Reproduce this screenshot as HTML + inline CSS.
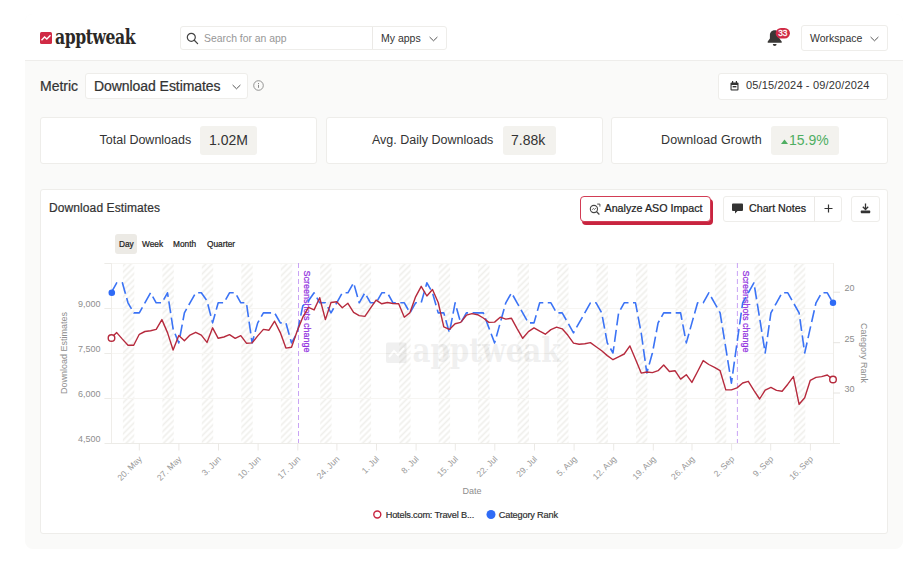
<!DOCTYPE html>
<html><head><meta charset="utf-8"><title>apptweak - Download Estimates</title>
<style>
*{box-sizing:border-box;margin:0;padding:0}
html,body{width:922px;height:566px;background:#fff;overflow:hidden}
body{position:relative;font-family:"Liberation Sans",sans-serif;color:#333;}
.app{position:absolute;left:25px;top:14px;width:878px;height:535px;background:#fafaf9;border-radius:8px;overflow:hidden}
.hdr{position:absolute;left:0;top:0;width:878px;height:47px;background:#fff;border-bottom:1px solid #eeedeb}
.abs{position:absolute}
.box{position:absolute;background:#fff;border:1px solid #eeedea;border-radius:3px}
.t{position:absolute;white-space:nowrap;line-height:1}
.chart{position:absolute;left:0;top:0}
.ax{font-family:"Liberation Sans",sans-serif;font-size:9px;fill:#8e8e8e}
.pl{font-family:"Liberation Sans",sans-serif;font-size:9px;fill:#9333e0;stroke:#9333e0;stroke-width:0.25px}
.lg{font-family:"Liberation Sans",sans-serif;font-size:9.2px;fill:#2d2d2d;stroke:#2d2d2d;stroke-width:0.18px}
.logo{font-family:"DejaVu Serif Condensed","Liberation Serif",serif;font-weight:bold;font-size:20px;color:#2b2826;letter-spacing:-0.5px;transform-origin:0 0;transform:scaleX(0.868)}
.pill{position:absolute;background:#f3f2ee;border-radius:3px}
.m{-webkit-text-stroke:0.22px currentColor}
</style></head><body>
<div class="app">
 <div class="hdr"></div>
</div>
<!-- header -->
<svg class="abs" style="left:40px;top:32px" width="12" height="12" viewBox="0 0 12 12"><rect width="12" height="12" rx="1.5" fill="#d02a45"/><polyline points="1.5,8.2 4.6,5 6.8,7 10.5,3.2" fill="none" stroke="#fff" stroke-width="1.4"/></svg>
<div class="t logo" style="left:55px;top:27px">apptweak</div>
<div class="box" style="left:180px;top:26px;width:267px;height:24px"></div>
<div class="abs" style="left:372px;top:27px;width:1px;height:22px;background:#ebe9e6"></div>
<svg class="abs" style="left:186px;top:32px" width="13" height="13" viewBox="0 0 13 13"><circle cx="5.3" cy="5.3" r="4" fill="none" stroke="#444" stroke-width="1.2"/><line x1="8.3" y1="8.3" x2="11.6" y2="11.6" stroke="#444" stroke-width="1.3" stroke-linecap="round"/></svg>
<div class="t" style="left:204px;top:33.500px;font-size:10.4px;color:#979797">Search for an app</div>
<div class="t" style="left:381px;top:32.500px;font-size:10.5px;color:#333">My apps</div>
<svg class="abs" style="left:429px;top:36px" width="9" height="6" viewBox="0 0 9 6"><polyline points="0.600,1 4.500,4.800 8.400,1" fill="none" stroke="#555" stroke-width="1"/></svg>
<!-- bell -->
<svg class="abs" style="left:766px;top:27px" width="26" height="22" viewBox="0 0 26 22"><path d="M8.700 3.200c-3 0-4.800 2.200-4.800 5v3.300l-2.200 3.100v1.100h14v-1.100l-2.200-3.100v-3.300c0-2.800-1.800-5-4.800-5z" fill="#3a3836"/><path d="M6.800 17.100h3.800a1.900 1.900 0 0 1-3.800 0z" fill="#3a3836"/><rect x="9.700" y="1" width="14.200" height="10.400" rx="5.200" fill="#d02a45"/><text x="16.800" y="9.100" text-anchor="middle" font-family="Liberation Sans, sans-serif" font-size="8.300" fill="#fff" stroke="#fff" stroke-width="0.300">33</text></svg>
<div class="box" style="left:801px;top:25px;width:87px;height:26px"></div>
<div class="t" style="left:810px;top:32.500px;font-size:10.500px;color:#333">Workspace</div>
<svg class="abs" style="left:870px;top:36px" width="9" height="6" viewBox="0 0 9 6"><polyline points="0.600,1 4.500,4.800 8.400,1" fill="none" stroke="#555" stroke-width="1"/></svg>
<!-- metric row -->
<div class="t m" style="left:40px;top:78.500px;font-size:14px;color:#333">Metric</div>
<div class="box" style="left:85px;top:73px;width:163px;height:26px"></div>
<div class="t m" style="left:94px;top:78.500px;font-size:14px;letter-spacing:-0.06px;color:#333">Download Estimates</div>
<svg class="abs" style="left:232px;top:83.500px" width="9" height="6" viewBox="0 0 9 6"><polyline points="0.600,1 4.500,4.800 8.400,1" fill="none" stroke="#555" stroke-width="1"/></svg>
<svg class="abs" style="left:253px;top:80px" width="11" height="11" viewBox="0 0 11 11"><circle cx="5.500" cy="5.500" r="4.800" fill="none" stroke="#888" stroke-width="0.900"/><rect x="5" y="4.800" width="1" height="3" fill="#888"/><rect x="5" y="3" width="1" height="1" fill="#888"/></svg>
<div class="box" style="left:718px;top:73px;width:170px;height:27px"></div>
<svg class="abs" style="left:729.5px;top:81px" width="9" height="10" viewBox="0 0 9 10"><rect x="0.500" y="1.500" width="8" height="8" rx="1" fill="#333"/><rect x="1.600" y="4" width="5.800" height="4.400" fill="#fff"/><rect x="2.600" y="5" width="3.800" height="1.400" fill="#333"/><rect x="2" y="0" width="1.200" height="2" fill="#333"/><rect x="5.800" y="0" width="1.200" height="2" fill="#333"/></svg>
<div class="t" style="left:746px;top:80px;font-size:11px;letter-spacing:0.16px;color:#333">05/15/2024 - 09/20/2024</div>
<!-- stat cards -->
<div class="box" style="left:40px;top:117px;width:277px;height:47px"></div>
<div class="box" style="left:326px;top:117px;width:277px;height:47px"></div>
<div class="box" style="left:611px;top:117px;width:277px;height:47px"></div>
<div class="t" style="left:99.500px;top:133.500px;font-size:12.500px">Total Downloads</div>
<div class="pill" style="left:200px;top:126px;width:57px;height:29px"></div>
<div class="t" style="left:209px;top:133px;font-size:14px">1.02M</div>
<div class="t" style="left:372px;top:133.500px;font-size:12.500px">Avg. Daily Downloads</div>
<div class="pill" style="left:503px;top:126px;width:53px;height:29px"></div>
<div class="t" style="left:511px;top:133px;font-size:14px">7.88k</div>
<div class="t" style="left:661px;top:133.500px;font-size:12.500px;letter-spacing:0.1px">Download Growth</div>
<div class="pill" style="left:770.500px;top:126px;width:68px;height:29px"></div>
<svg class="abs" style="left:781px;top:139px" width="7" height="5" viewBox="0 0 7 5"><polygon points="0,5 3.500,0.500 7,5" fill="#4fae62"/></svg>
<div class="t" style="left:789px;top:133px;font-size:14px;color:#4fae62">15.9%</div>
<!-- chart card -->
<div class="box" style="left:40px;top:189px;width:848px;height:345px"></div>
<div class="t m" style="left:49px;top:202px;font-size:12px;letter-spacing:0.1px;color:#333">Download Estimates</div>
<div class="abs" style="left:582px;top:198.500px;width:130.500px;height:26px;border-radius:4px;background:#c8243f"></div>
<div class="abs" style="left:580px;top:196px;width:130.500px;height:26px;border-radius:4px;background:#fff;border:1px solid #d23c55"></div>
<svg class="abs" style="left:588.500px;top:202.500px" width="12" height="12" viewBox="0 0 11 11"><circle cx="4.500" cy="5.500" r="3.300" fill="none" stroke="#444" stroke-width="1"/><line x1="7" y1="8" x2="9.500" y2="10.500" stroke="#444" stroke-width="1.100"/><polyline points="2.800,6.300 4,5 5,6 6.300,4.500" fill="none" stroke="#444" stroke-width="0.700"/><polyline points="7.500,1 10,1 10,3.300" fill="none" stroke="#444" stroke-width="0.900"/></svg>
<div class="t m" style="left:604.500px;top:203px;font-size:10.700px;color:#222">Analyze ASO Impact</div>
<div class="box" style="left:723px;top:196px;width:119px;height:26px"></div>
<div class="abs" style="left:814px;top:197px;width:1px;height:24px;background:#ebe9e6"></div>
<svg class="abs" style="left:732px;top:203px" width="11" height="11" viewBox="0 0 11 11"><path d="M1 0.500h9a1 1 0 0 1 1 1v5.500a1 1 0 0 1-1 1H5.500l-2.500 2.500v-2.500H1a1 1 0 0 1-1-1V1.500a1 1 0 0 1 1-1z" fill="#333"/></svg>
<div class="t m" style="left:749px;top:203px;font-size:10.700px;color:#222">Chart Notes</div>
<svg class="abs" style="left:824px;top:204px" width="9" height="9" viewBox="0 0 9 9"><path d="M4.500 0.500v8M0.500 4.500h8" stroke="#333" stroke-width="1.200"/></svg>
<div class="box" style="left:851px;top:196px;width:29px;height:26px"></div>
<svg class="abs" style="left:860px;top:203px" width="11" height="11" viewBox="0 0 11 11"><path d="M5.500 0.500v5.500M2.800 3.800l2.700 2.700 2.700-2.700" fill="none" stroke="#333" stroke-width="1.300"/><rect x="0.800" y="7.600" width="9.400" height="2.600" rx="0.600" fill="#333"/></svg>
<div class="pill" style="left:115px;top:234px;width:22px;height:20px;background:#eceae5"></div>
<div class="t m" style="left:119px;top:240px;font-size:8.3px;color:#222">Day</div>
<div class="t m" style="left:142px;top:240px;font-size:8.3px;color:#222">Week</div>
<div class="t m" style="left:173px;top:240px;font-size:8.3px;color:#222">Month</div>
<div class="t m" style="left:207px;top:240px;font-size:8.3px;color:#222">Quarter</div>
<svg class="chart" width="922" height="566" viewBox="0 0 922 566">
<defs><pattern id="hatch" width="4.4" height="4.4" patternUnits="userSpaceOnUse" patternTransform="rotate(45)"><line x1="2.2" y1="0" x2="2.2" y2="4.4" stroke="#f0efec" stroke-width="1.7"/></pattern></defs>
<rect x="122.9" y="263" width="11.4" height="180" fill="url(#hatch)"/><rect x="162.4" y="263" width="11.4" height="180" fill="url(#hatch)"/><rect x="201.8" y="263" width="11.4" height="180" fill="url(#hatch)"/><rect x="241.3" y="263" width="11.4" height="180" fill="url(#hatch)"/><rect x="280.8" y="263" width="11.4" height="180" fill="url(#hatch)"/><rect x="320.2" y="263" width="11.4" height="180" fill="url(#hatch)"/><rect x="359.7" y="263" width="11.4" height="180" fill="url(#hatch)"/><rect x="399.2" y="263" width="11.4" height="180" fill="url(#hatch)"/><rect x="438.7" y="263" width="11.4" height="180" fill="url(#hatch)"/><rect x="478.1" y="263" width="11.4" height="180" fill="url(#hatch)"/><rect x="517.6" y="263" width="11.4" height="180" fill="url(#hatch)"/><rect x="557.1" y="263" width="11.4" height="180" fill="url(#hatch)"/><rect x="596.5" y="263" width="11.4" height="180" fill="url(#hatch)"/><rect x="636.0" y="263" width="11.4" height="180" fill="url(#hatch)"/><rect x="675.5" y="263" width="11.4" height="180" fill="url(#hatch)"/><rect x="714.9" y="263" width="11.4" height="180" fill="url(#hatch)"/><rect x="754.4" y="263" width="11.4" height="180" fill="url(#hatch)"/><rect x="793.9" y="263" width="11.4" height="180" fill="url(#hatch)"/>
<line x1="104.5" y1="263.5" x2="833" y2="263.5" stroke="#f6f5f2" stroke-width="1"/><line x1="104.5" y1="263.5" x2="111" y2="263.5" stroke="#ecebe7"/><line x1="104.5" y1="308.5" x2="833" y2="308.5" stroke="#f6f5f2" stroke-width="1"/><line x1="104.5" y1="308.5" x2="111" y2="308.5" stroke="#ecebe7"/><line x1="104.5" y1="353.5" x2="833" y2="353.5" stroke="#f6f5f2" stroke-width="1"/><line x1="104.5" y1="353.5" x2="111" y2="353.5" stroke="#ecebe7"/><line x1="104.5" y1="398.5" x2="833" y2="398.5" stroke="#f6f5f2" stroke-width="1"/><line x1="104.5" y1="398.5" x2="111" y2="398.5" stroke="#ecebe7"/>
<line x1="111.5" y1="263" x2="111.5" y2="443" stroke="#efede9"/>
<line x1="833.5" y1="263" x2="833.5" y2="443" stroke="#efede9"/>
<line x1="104.5" y1="443.5" x2="840" y2="443.5" stroke="#ecebe7"/>
<g class="wm" opacity="0.055"><rect x="386" y="342.5" width="20.5" height="20.5" rx="2" fill="#000"/><polyline points="389,357 394,351 398,355 404,348" fill="none" stroke="#fff" stroke-width="2"/><text x="412.5" y="362" font-family="DejaVu Serif Condensed, Liberation Serif, serif" font-weight="bold" font-size="34" fill="#000" textLength="148" lengthAdjust="spacingAndGlyphs">apptweak</text></g>
<line x1="298.5" y1="263" x2="298.5" y2="443" stroke="#c9a4f5" stroke-dasharray="5,3"/>
<line x1="737.4" y1="263" x2="737.4" y2="443" stroke="#c9a4f5" stroke-dasharray="5,3"/>
<text transform="translate(303.6,270.5) rotate(90)" class="pl">Screenshots change</text>
<text transform="translate(743,270.5) rotate(90)" class="pl">Screenshots change</text>
<text x="100.5" y="307.2" text-anchor="end" class="ax">9,000</text><text x="100.5" y="352.2" text-anchor="end" class="ax">7,500</text><text x="100.5" y="397.2" text-anchor="end" class="ax">6,000</text><text x="100.5" y="442.2" text-anchor="end" class="ax">4,500</text><line x1="833" y1="292.2" x2="840" y2="292.2" stroke="#e6e4e0"/><text x="844.5" y="291.0" class="ax">20</text><line x1="833" y1="342.7" x2="840" y2="342.7" stroke="#e6e4e0"/><text x="844.5" y="341.5" class="ax">25</text><line x1="833" y1="393.0" x2="840" y2="393.0" stroke="#e6e4e0"/><text x="844.5" y="391.8" class="ax">30</text><line x1="139.3" y1="443" x2="139.3" y2="450.5" stroke="#ebe9e5" stroke-width="1"/><text transform="translate(142.5,459.6) rotate(-45)" text-anchor="end" class="ax" style="font-size:8.6px;fill:#999">20. May</text><line x1="178.9" y1="443" x2="178.9" y2="450.5" stroke="#ebe9e5" stroke-width="1"/><text transform="translate(182.1,459.6) rotate(-45)" text-anchor="end" class="ax" style="font-size:8.6px;fill:#999">27. May</text><line x1="218.5" y1="443" x2="218.5" y2="450.5" stroke="#ebe9e5" stroke-width="1"/><text transform="translate(221.7,459.6) rotate(-45)" text-anchor="end" class="ax" style="font-size:8.6px;fill:#999">3. Jun</text><line x1="258.1" y1="443" x2="258.1" y2="450.5" stroke="#ebe9e5" stroke-width="1"/><text transform="translate(261.3,459.6) rotate(-45)" text-anchor="end" class="ax" style="font-size:8.6px;fill:#999">10. Jun</text><line x1="297.8" y1="443" x2="297.8" y2="450.5" stroke="#ebe9e5" stroke-width="1"/><text transform="translate(301.0,459.6) rotate(-45)" text-anchor="end" class="ax" style="font-size:8.6px;fill:#999">17. Jun</text><line x1="336.9" y1="443" x2="336.9" y2="450.5" stroke="#ebe9e5" stroke-width="1"/><text transform="translate(340.1,459.6) rotate(-45)" text-anchor="end" class="ax" style="font-size:8.6px;fill:#999">24. Jun</text><line x1="376.5" y1="443" x2="376.5" y2="450.5" stroke="#ebe9e5" stroke-width="1"/><text transform="translate(379.7,459.6) rotate(-45)" text-anchor="end" class="ax" style="font-size:8.6px;fill:#999">1. Jul</text><line x1="416.1" y1="443" x2="416.1" y2="450.5" stroke="#ebe9e5" stroke-width="1"/><text transform="translate(419.3,459.6) rotate(-45)" text-anchor="end" class="ax" style="font-size:8.6px;fill:#999">8. Jul</text><line x1="455.3" y1="443" x2="455.3" y2="450.5" stroke="#ebe9e5" stroke-width="1"/><text transform="translate(458.5,459.6) rotate(-45)" text-anchor="end" class="ax" style="font-size:8.6px;fill:#999">15. Jul</text><line x1="494.8" y1="443" x2="494.8" y2="450.5" stroke="#ebe9e5" stroke-width="1"/><text transform="translate(498.0,459.6) rotate(-45)" text-anchor="end" class="ax" style="font-size:8.6px;fill:#999">22. Jul</text><line x1="534.5" y1="443" x2="534.5" y2="450.5" stroke="#ebe9e5" stroke-width="1"/><text transform="translate(537.7,459.6) rotate(-45)" text-anchor="end" class="ax" style="font-size:8.6px;fill:#999">29. Jul</text><line x1="574.1" y1="443" x2="574.1" y2="450.5" stroke="#ebe9e5" stroke-width="1"/><text transform="translate(577.3,459.6) rotate(-45)" text-anchor="end" class="ax" style="font-size:8.6px;fill:#999">5. Aug</text><line x1="613.7" y1="443" x2="613.7" y2="450.5" stroke="#ebe9e5" stroke-width="1"/><text transform="translate(616.9,459.6) rotate(-45)" text-anchor="end" class="ax" style="font-size:8.6px;fill:#999">12. Aug</text><line x1="653.3" y1="443" x2="653.3" y2="450.5" stroke="#ebe9e5" stroke-width="1"/><text transform="translate(656.5,459.6) rotate(-45)" text-anchor="end" class="ax" style="font-size:8.6px;fill:#999">19. Aug</text><line x1="692.0" y1="443" x2="692.0" y2="450.5" stroke="#ebe9e5" stroke-width="1"/><text transform="translate(695.2,459.6) rotate(-45)" text-anchor="end" class="ax" style="font-size:8.6px;fill:#999">26. Aug</text><line x1="731.6" y1="443" x2="731.6" y2="450.5" stroke="#ebe9e5" stroke-width="1"/><text transform="translate(734.8,459.6) rotate(-45)" text-anchor="end" class="ax" style="font-size:8.6px;fill:#999">2. Sep</text><line x1="770.7" y1="443" x2="770.7" y2="450.5" stroke="#ebe9e5" stroke-width="1"/><text transform="translate(773.9,459.6) rotate(-45)" text-anchor="end" class="ax" style="font-size:8.6px;fill:#999">9. Sep</text><line x1="810.4" y1="443" x2="810.4" y2="450.5" stroke="#ebe9e5" stroke-width="1"/><text transform="translate(813.6,459.6) rotate(-45)" text-anchor="end" class="ax" style="font-size:8.6px;fill:#999">16. Sep</text>
<text transform="translate(66.5,353) rotate(-90)" text-anchor="middle" class="ax">Download Estimates</text>
<text transform="translate(861.3,353) rotate(90)" text-anchor="middle" class="ax">Category Rank</text>
<text x="472" y="493.6" text-anchor="middle" class="ax">Date</text>
<polyline points="111.1,292.8 116.7,282.8 122.4,282.8 128.0,302.8 133.7,312.9 139.3,312.9 144.9,302.8 150.6,292.8 156.2,302.8 161.9,302.8 167.5,292.8 173.1,328.9 178.8,342.9 184.4,312.9 190.0,302.8 195.7,292.8 201.3,292.8 207.0,300.8 212.6,322.9 218.2,302.8 223.9,302.8 229.5,292.8 235.2,292.8 240.8,302.8 246.4,302.8 252.1,342.9 257.7,322.9 263.4,312.9 269.0,312.9 274.6,312.9 280.3,322.9 285.9,322.9 291.5,342.9 297.2,332.9 302.8,305.8 308.5,300.8 314.1,292.8 319.7,302.8 325.4,302.8 331.0,312.9 336.7,302.8 342.3,292.8 347.9,292.8 353.6,282.8 359.2,302.8 364.9,292.8 370.5,302.8 376.1,302.8 381.8,292.8 387.4,292.8 393.0,302.8 398.7,302.8 404.3,302.8 410.0,312.9 415.6,302.8 421.2,302.8 426.9,282.8 432.5,292.8 438.2,312.9 443.8,312.9 449.4,332.9 455.1,302.8 460.7,322.9 466.4,312.9 472.0,312.9 477.6,312.9 483.3,312.9 488.9,327.9 494.6,342.9 500.2,322.9 505.8,302.8 511.5,292.8 517.1,302.8 522.7,312.9 528.4,322.9 534.0,322.9 539.7,302.8 545.3,302.8 550.9,302.8 556.6,312.9 562.2,312.9 567.9,322.9 573.5,332.9 579.1,322.9 584.8,312.9 590.4,302.8 596.1,302.8 601.7,312.9 607.3,342.9 613.0,353.0 618.6,312.9 624.2,302.8 629.9,302.8 635.5,302.8 641.2,332.9 646.8,373.0 652.4,353.0 658.1,322.9 663.7,312.9 669.4,312.9 675.0,312.9 680.6,312.9 686.3,342.9 691.9,322.9 697.6,302.8 703.2,302.8 708.8,292.8 714.5,302.8 720.1,312.9 725.8,348.0 731.4,383.1 737.0,342.9 742.7,302.8 748.3,292.8 753.9,282.8 759.6,317.9 765.2,353.0 770.9,312.9 776.5,302.8 782.1,292.8 787.8,292.8 793.4,302.8 799.1,312.9 804.7,353.0 810.3,327.9 816.0,302.8 821.6,292.8 827.3,292.8 832.9,302.8" fill="none" stroke="#3b73f5" stroke-width="1.6" stroke-dasharray="12,4.5" stroke-linejoin="round"/>
<polyline points="111.1,338.0 116.7,332.6 122.4,339.1 128.0,345.2 133.7,345.2 139.3,334.3 144.9,331.5 150.6,330.7 156.2,329.4 161.9,319.6 167.5,332.6 173.1,350.0 178.8,335.4 184.4,340.8 190.0,335.1 195.7,332.3 201.3,335.1 207.0,342.4 212.6,327.8 218.2,338.3 223.9,337.0 229.5,334.7 235.2,338.3 240.8,335.6 246.4,343.2 252.1,342.9 257.7,335.9 263.4,329.4 269.0,330.2 274.6,321.2 280.3,332.6 285.9,348.1 291.5,347.3 297.2,331.0 302.8,317.2 308.5,307.4 314.1,309.9 319.7,297.7 325.4,319.6 331.0,302.5 336.7,301.7 342.3,307.7 347.9,303.3 353.6,312.3 359.2,315.6 364.9,316.4 370.5,308.2 376.1,300.1 381.8,303.8 387.4,302.5 393.0,303.5 398.7,303.8 404.3,317.2 410.0,312.6 415.6,296.8 421.2,286.3 426.9,296.0 432.5,289.5 438.2,302.5 443.8,326.9 449.4,329.4 455.1,323.7 460.7,322.4 466.4,315.2 472.0,313.6 477.6,314.7 483.3,318.0 488.9,322.4 494.6,322.1 500.2,317.2 505.8,319.1 511.5,318.3 517.1,328.6 522.7,338.3 528.4,331.6 534.0,327.9 539.7,331.2 545.3,334.2 550.9,329.6 556.6,327.2 562.2,328.8 567.9,335.3 573.5,343.1 579.1,344.3 584.8,343.8 590.4,342.6 596.1,346.7 601.7,350.8 607.3,355.6 613.0,359.7 618.6,356.8 624.2,354.0 629.9,345.9 635.5,359.3 641.2,373.1 646.8,372.0 652.4,372.6 658.1,370.7 663.7,365.0 669.4,371.5 675.0,370.7 680.6,379.1 686.3,374.7 691.9,382.4 697.6,371.5 703.2,360.6 708.8,364.5 714.5,367.4 720.1,370.7 725.8,389.9 731.4,389.9 737.0,387.9 742.7,383.0 748.3,381.3 753.9,390.3 759.6,399.0 765.2,390.1 770.9,387.4 776.5,390.4 782.1,391.2 787.8,384.2 793.4,376.6 799.1,404.3 804.7,397.8 810.3,380.3 816.0,377.4 821.6,376.6 827.3,375.0 832.9,379.5" fill="none" stroke="#b62a3d" stroke-width="1.4" stroke-linejoin="round"/>
<circle cx="111.8" cy="292.8" r="3.3" fill="#2f6bf6"/>
<circle cx="833" cy="302.8" r="3.2" fill="#2f6bf6"/>
<circle cx="111.5" cy="338" r="3.3" fill="#fff" stroke="#b62a3d" stroke-width="1.4"/>
<circle cx="833" cy="379.5" r="3.3" fill="#fff" stroke="#b62a3d" stroke-width="1.4"/>
<circle cx="377.3" cy="514.5" r="3.5" fill="#fff" stroke="#c8243f" stroke-width="1.4"/>
<text x="385.7" y="517.8" class="lg" textLength="88.5" lengthAdjust="spacing">Hotels.com: Travel B...</text>
<circle cx="491" cy="514.5" r="4.5" fill="#2f6bf6"/>
<text x="498.8" y="517.8" class="lg" textLength="59.2" lengthAdjust="spacing">Category Rank</text>
</svg>
</body></html>
